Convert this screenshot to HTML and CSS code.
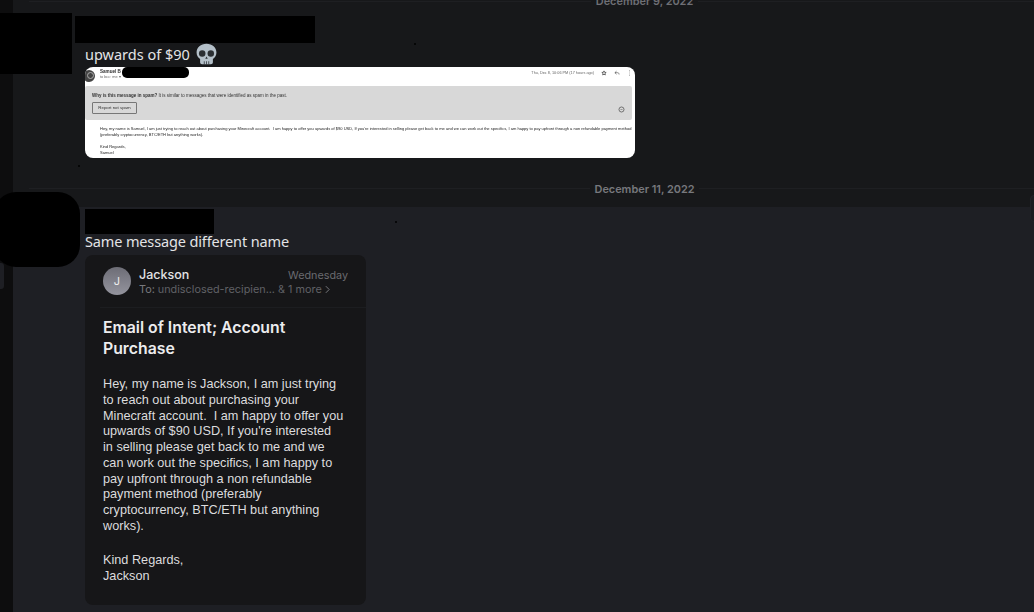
FILE: index.html
```html
<!DOCTYPE html>
<html lang="en">
<head>
<meta charset="utf-8">
<title>Chat</title>
<link rel="stylesheet" href="styles.css">
</head>
<body>
<div class="app">
  <div class="rail"><div class="rail-tab"></div></div>
  <main class="chat">
    <section class="day day-first">
      <div class="divider divider-top"><span class="date">December 9, 2022</span></div>
      <div class="msg msg-a">
        <p class="text">upwards of $90 <svg class="skull" viewBox="0 0 22 22"><path fill="#b4c0c9" d="M11 .2C5 .2.6 4 .6 9.500c0 3 1.400 5.300 3.700 6.800v3.400c0 1.200.9 2.100 2 2.100h9.400c1.100 0 2-.9 2-2.100v-3.400c2.300-1.500 3.700-3.800 3.700-6.800C21.400 4 17 .2 11 .2z"/><circle cx="6.500" cy="10.500" r="3.400" fill="#2b2f33"/><circle cx="15.500" cy="10.500" r="3.400" fill="#2b2f33"/><path fill="#2b2f33" d="M11 13.500l1.300 2.500H9.700zM8.200 18.500h.8V22h-.8zM10.600 18.500h.8V22h-.8zM13 18.500h.8V22H13z"/></svg></p>
        <div class="shot">
          <div class="shot-head">
            <div class="shot-avatar"></div>
            <div class="shot-from">
              <span class="shot-name">Samuel B</span>
              <span class="shot-to">to bcc: me ▾</span>
            </div>
            <span class="shot-time">Thu, Dec 8, 10:06 PM (17 hours ago)</span>
            <svg class="shot-icon" viewBox="0 0 10 10"><path fill="none" stroke="#444" stroke-width="1.300" d="M5 1.500l1 2.400 2.600.2-2 1.700.6 2.500L5 7l-2.200 1.300.6-2.500-2-1.700L4 3.900z"/></svg>
            <svg class="shot-icon" viewBox="0 0 10 10"><path fill="none" stroke="#444" d="M4.200 2L1.500 4.500 4.200 7M1.500 4.500H6c1.500 0 2.500 1 2.500 3"/></svg>
            <svg class="shot-icon shot-more" viewBox="0 0 4 10"><path fill="#444" d="M1.400 1h1.200v1.200H1.400zM1.400 4.400h1.200v1.200H1.400zM1.400 7.800h1.200V9H1.400z"/></svg>
          </div>
          <div class="spam">
            <p class="spam-why"><b>Why is this message in spam?</b> It is similar to messages that were identified as spam in the past.</p>
            <div class="spam-row">
              <span class="spam-btn">Report not spam</span>
              <svg class="spam-icon" viewBox="0 0 10 10"><circle cx="5" cy="5" r="3.600" fill="none" stroke="#555" stroke-width="1.100"/><path fill="#555" d="M3.500 4.500h3v1h-3z"/></svg>
            </div>
          </div>
          <div class="shot-body">
            <p>Hey, my name is Samuel, I am just trying to reach out about purchasing your Minecraft account.&nbsp; I am happy to offer you upwards of $90 USD, If you're interested in selling please get back to me and we can work out the specifics, I am happy to pay upfront through a non refundable payment method (preferably cryptocurrency, BTC/ETH but anything works).</p>
            <p class="shot-sign">Kind Regards,<br>Samuel</p>
          </div>
        </div>
      </div>
      <div class="divider divider-mid"><span class="date date-mid">December 11, 2022</span></div>
    </section>
    <section class="day day-hover">
      <div class="msg msg-b">
        <div class="author-space"></div>
        <p class="text text-b">Same message different name</p>
        <article class="mail">
          <header class="mail-head">
            <div class="mail-avatar">J</div>
            <div class="mail-meta">
              <div class="mail-row"><span class="mail-name">Jackson</span><span class="mail-day">Wednesday</span></div>
              <div class="mail-to"><span class="to-label">To:</span> undisclosed-recipien... &amp; 1 more <svg class="chev" viewBox="0 0 6 10"><path fill="none" stroke="#77787d" stroke-width="1.200" d="M1 1l4 4-4 4"/></svg></div>
            </div>
          </header>
          <h2 class="mail-title">Email of Intent; Account Purchase</h2>
          <div class="mail-body">
            <p>Hey, my name is Jackson, I am just trying to reach out about purchasing your Minecraft account.&nbsp; I am happy to offer you upwards of $90 USD, If you're interested in selling please get back to me and we can work out the specifics, I am happy to pay upfront through a non refundable payment method (preferably cryptocurrency, BTC/ETH but anything works).</p>
            <p class="mail-sign">Kind Regards,<br>Jackson</p>
          </div>
        </article>
      </div>
    </section>
  </main>
  <div class="redact r-avatar-a"></div>
  <div class="redact r-name-a"></div>
  <div class="redact r-sender"></div>
  <div class="redact r-avatar-b"></div>
  <div class="redact r-name-b"></div>
  <div class="speck s1"></div>
  <div class="speck s2"></div>
  <div class="speck s3"></div>
  <div class="edge-tab"></div>
</div>
</body>
</html>
```

FILE: styles.css
```css
* { box-sizing: border-box; }
html, body { margin: 0; height: 100%; overflow: hidden; background: #17181a; }
p, h2 { margin: 0; }
.app { position: relative; display: flex; width: 1034px; height: 612px; overflow: hidden; font-family: "Noto Sans", sans-serif; }
.rail { width: 13px; flex: none; background: #0d0d0e; padding-top: 263px; }
.rail-tab { width: 4px; height: 26px; background: #1e1f24; border-radius: 0 3px 3px 0; }
.chat { flex: 1; display: flex; flex-direction: column; min-width: 0; }
.day-first { height: 207px; flex: none; display: flex; flex-direction: column; }
.day-hover { flex: 1; background: #1e1f24; }
.divider { display: flex; justify-content: center; height: 1px; background: #1e1f22; margin-left: 16px; position: relative; }
.divider-top { margin-top: 1px; }
.date { background: #17181a; padding: 0 5px; font: 600 10.9px/14px Inter, sans-serif; color: #6e6f75; height: 14px; margin-top: -7px; position: relative; left: 113px; }
.date-mid { color: #77787d; margin-top: -6px; }
.divider-mid { margin-top: 30px; }
.msg { padding-left: 72px; }
.msg-a { padding-top: 38px; }
.text { font-size: 14.5px; line-height: 20px; color: #e3e4e6; display: flex; align-items: center; gap: 6px; height: 27px; }
.skull { width: 21px; height: 22px; flex: none; }
.shot { width: 550px; height: 91px; background: #fff; border-radius: 8px; overflow: hidden; font: 3.7px/5px "Liberation Sans", sans-serif; color: #333; filter: blur(.35px); }
.shot-head { display: flex; align-items: center; height: 19px; padding: 0 4px 0 0; gap: 6px; }
.shot-avatar { width: 12px; height: 12px; border-radius: 50%; background: #444; margin-left: -2px; margin-top: -2px; flex: none; display: flex; align-items: center; justify-content: center; }
.shot-avatar::after { content: ""; width: 5px; height: 5px; margin-left: 2px; border: 1px solid #aaa; border-radius: 50%; }
.shot-from { display: flex; flex-direction: column; flex: 1; margin-left: -1px; margin-top: -5px; }
.shot-name { font-weight: 700; font-size: 4.6px; }
.shot-to { color: #666; font-size: 3.8px; margin-top: 1px; }
.shot-time { color: #666; margin-top: -7px; font-size: 3.8px; }
.shot-icon { width: 6px; height: 6px; margin-top: -7px; margin-left: 1px; }
.shot-more { width: 3px; margin-left: 2px; }
.spam { height: 34px; background: #d8d8d8; border-radius: 2px; margin-right: 3px; padding: 7px 7px 0 7px; }
.spam-why { font-size: 4.5px; height: 9px; }
.spam-row { display: flex; justify-content: space-between; align-items: center; }
.spam-btn { border: 1px solid #777; border-radius: 1px; width: 45px; height: 12px; line-height: 10px; text-align: center; font-size: 4.4px; }
.spam-icon { width: 7px; height: 7px; margin-top: 2px; }
.shot-body { padding: 6px 3px 0 15px; font-size: 4.04px; line-height: 6.100px; color: #222; }
.shot-sign { margin-top: 5.500px; line-height: 6.500px; }
.author-space { height: 20px; }
.text-b { font-size: 14.5px; letter-spacing: -.14px; height: 28px; }
.mail { width: 281px; height: 350px; background: #161618; border-radius: 8px; font-family: Inter, sans-serif; padding-top: 12px; }
.mail-head { display: flex; gap: 8px; margin-left: 15px; padding: 0 18px 13px 3px; border-bottom: 1px solid #1c1d20; height: 41px; }
.mail-avatar { width: 28px; height: 28px; border-radius: 50%; background: linear-gradient(#6d6d76, #94949e); color: #eee; font: 400 11px/28px Inter, sans-serif; text-align: center; flex: none; }
.mail-meta { flex: 1; }
.mail-row { display: flex; justify-content: space-between; align-items: baseline; }
.mail-name { font-size: 12.5px; line-height: 15px; font-weight: 500; color: #e2e2e4; }
.mail-day { font-size: 10.8px; color: #6a6b70; }
.mail-to { font-size: 10.85px; line-height: 15px; color: #606166; white-space: nowrap; display: flex; align-items: center; gap: 3px; }
.to-label { color: #77787d; }
.chev { width: 5px; height: 9px; }
.mail-title { padding: 9px 18px 0; font-size: 15.8px; font-weight: 600; line-height: 21px; color: #ececee; }
.mail-body { padding: 18px 22px 0 18px; font: 12.7px/15.78px "Liberation Sans", sans-serif; color: #dcdcde; }
.mail-sign { margin-top: 18px; }
.redact { position: absolute; background: #000; }
.r-avatar-a { left: 0; top: 13px; width: 72px; height: 61px; }
.r-name-a { left: 75px; top: 16px; width: 240px; height: 27px; }
.r-sender { left: 122px; top: 67px; width: 67px; height: 11px; border-radius: 5px; }
.r-avatar-b { left: -6px; top: 192px; width: 86px; height: 75px; border-radius: 22px; }
.r-name-b { left: 85px; top: 209px; width: 129px; height: 25px; }
.speck { position: absolute; width: 2px; height: 2px; border-radius: 50%; background: #000; }
.s1 { left: 414px; top: 43px; }
.s2 { left: 78px; top: 165px; }
.s3 { left: 395px; top: 221px; }
.edge-tab { position: absolute; left: 1030px; top: 195px; width: 10px; height: 27px; border: 1px solid #222328; border-radius: 4px; background: #1c1d21; }
```
